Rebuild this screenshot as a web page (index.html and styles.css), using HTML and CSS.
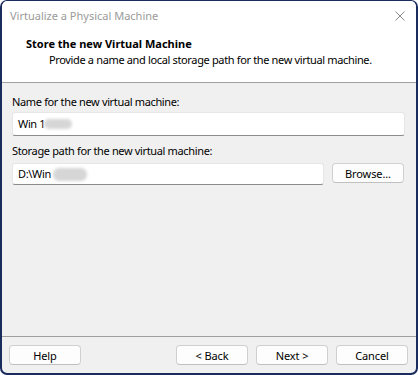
FILE: index.html
```html
<!DOCTYPE html>
<html>
<head>
<meta charset="utf-8">
<link rel="stylesheet" href="styles.css">
</head>
<body>
<div class="window">
  <div class="titlebar">
    <span class="title">Virtualize a Physical Machine</span>
    <svg class="close" width="10" height="10" viewBox="0 0 10 10"><path d="M0.5 0.5 L9.5 9.5 M9.5 0.5 L0.5 9.5" stroke="#8a8a8a" stroke-width="1" fill="none"/></svg>
  </div>
  <div class="header">
    <div class="heading">Store the new Virtual Machine</div>
    <div class="desc">Provide a name and local storage path for the new virtual machine.</div>
  </div>
  <div class="sep"></div>
  <div class="content">
    <div class="label">Name for the new virtual machine:</div>
    <div class="input full"><span class="val">Win 1</span><span class="blur b1"></span></div>
    <div class="label l2">Storage path for the new virtual machine:</div>
    <div class="row">
      <div class="input path"><span class="val">D:\Win</span><span class="blur b2"></span></div>
      <button class="btn browse">Browse...</button>
    </div>
  </div>
  <div class="sep"></div>
  <div class="footer">
    <button class="btn">Help</button>
    <div class="spacer"></div>
    <button class="btn">&lt; Back</button>
    <button class="btn">Next &gt;</button>
    <button class="btn">Cancel</button>
  </div>
</div>
</body>
</html>
```

FILE: styles.css
```css
* { box-sizing: border-box; }
html, body { margin: 0; padding: 0; background: #ffffff; }
body { font-family: "Noto Sans", "Open Sans", sans-serif; font-size: 11px; letter-spacing: -0.35px; color: #000; }
.window {
  width: 418px; height: 375px;
  border: 2px solid #1a2b5e; border-top-width: 1px;
  border-radius: 7px;
  display: flex; flex-direction: column;
  overflow: hidden;
  background: #f0f0f0;
}
.titlebar {
  height: 29px; background: #fff;
  display: flex; align-items: center; justify-content: space-between;
  padding: 0 11px 0 8px;
}
.title { color: #9a9a9a; font-size: 11px; letter-spacing: 0; white-space: nowrap; }
.close { display: block; }
.header { background: #fff; height: 52px; padding: 6px 0 0 24px; white-space: nowrap; }
.heading { font-weight: bold; line-height: 16px; letter-spacing: 0; }
.desc { line-height: 16px; padding-left: 23px; }
.sep { height: 1px; background: #a0a0a0; }
.content { flex: 1; padding: 11px 11px 0 10px; }
.label { line-height: 16px; margin-bottom: 2px; }
.label.l2 { margin-top: 7px; margin-bottom: 4px; }
.input {
  background: #fff; border: 1px solid #e6e6e6; border-bottom: 1px solid #8b8b8b;
  border-radius: 3px; height: 24px;
  display: flex; align-items: center; padding-left: 5px;
  position: relative;
}
.input.path { flex: 1; height: 22px; }
.val { line-height: 16px; }
.blur {
  display: inline-block; background: #d6d6d6; border-radius: 6px;
  filter: blur(1.5px);
}
.b1 { width: 28px; height: 10px; margin-left: -1px; }
.b2 { width: 34px; height: 13px; margin-left: 2px; }
.row { display: flex; gap: 8px; align-items: flex-start; }
.btn {
  font-family: inherit; font-size: 11px; letter-spacing: -0.1px; color: #000;
  width: 72px; height: 20px; padding: 0;
  background: #fdfdfd; border: 1px solid #d0d0d0; border-bottom-color: #c0c0c0;
  border-radius: 4px;
}
.browse { margin-right: 1px; }
.footer { display: flex; gap: 8px; padding: 8px 8px 8px 7px; }
.spacer { flex: 1; }
```
